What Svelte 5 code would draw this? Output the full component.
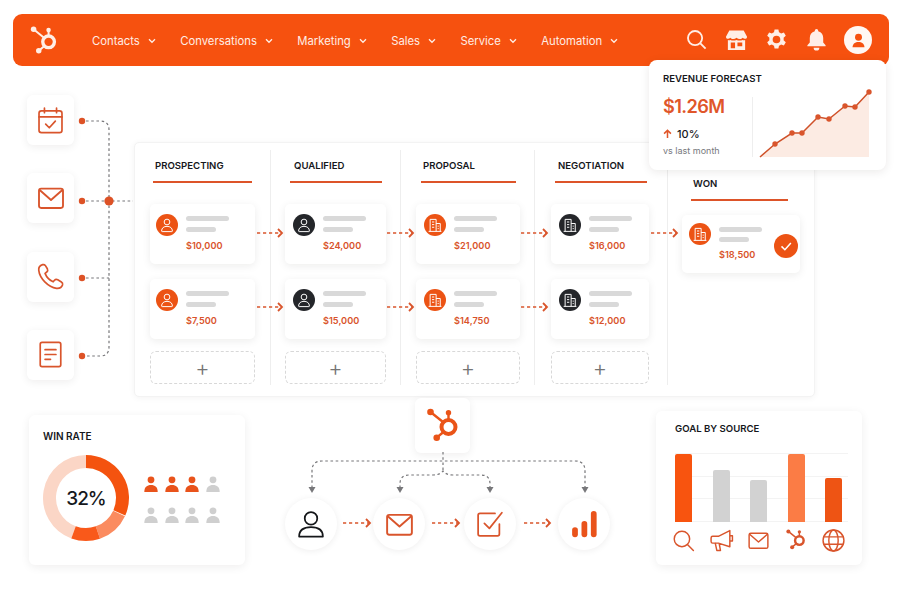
<script>
  const navItems = ['Contacts', 'Conversations', 'Marketing', 'Sales', 'Service', 'Automation'];

  const columns = [
    { name: 'PROSPECTING', key: 'c1', kind: 'person', dark: false, amounts: ['$10,000', '$7,500'] },
    { name: 'QUALIFIED', key: 'c2', kind: 'person', dark: true, amounts: ['$24,000', '$15,000'] },
    { name: 'PROPOSAL', key: 'c3', kind: 'building', dark: false, amounts: ['$21,000', '$14,750'] },
    { name: 'NEGOTIATION', key: 'c4', kind: 'building', dark: true, amounts: ['$16,000', '$12,000'] },
    { name: 'WON', key: 'c5', kind: 'building', dark: false, amounts: ['$18,500'], won: true }
  ];

  const cardArrows = [
    [257, 282, 233], [387, 413, 233], [521, 547, 233], [651, 677, 233],
    [257, 282, 307], [387, 413, 307], [521, 547, 307]
  ];
  const flowArrows = [[343, 370, 523], [432, 459, 523], [524, 550, 523]];
  const arrows = [...cardArrows, ...flowArrows];

  const forecast = [[775, 144], [792, 133], [802, 133], [818, 117], [829, 119], [845, 106], [855, 107], [869, 92]];
  const forecastLine = 'M760 157 ' + forecast.map((p) => `L${p[0]} ${p[1]}`).join(' ');
  const forecastArea = forecastLine + ' V157 Z';

  function arc(a0, a1, r = 36.5) {
    const p = (a) => {
      const t = ((a - 90) * Math.PI) / 180;
      return `${(r * Math.cos(t)).toFixed(2)} ${(r * Math.sin(t)).toFixed(2)}`;
    };
    return `M${p(a0)} A${r} ${r} 0 ${a1 - a0 > 180 ? 1 : 0} 1 ${p(a1)}`;
  }
  const donut = [
    { d: arc(200, 360), c: '#fbd6c6' },
    { d: arc(0, 114), c: '#f4530f' },
    { d: arc(115, 161), c: '#fb8b5f' },
    { d: arc(161, 200), c: '#f9591a' }
  ];

  const people = [true, true, true, false, false, false, false, false];

  const bars = [
    { h: 68, c: '#f8540f', icon: 'search' },
    { h: 52, c: '#d2d2d2', icon: 'mega' },
    { h: 42, c: '#d2d2d2', icon: 'mail' },
    { h: 68, c: '#fb7c45', icon: 'hub' },
    { h: 44, c: '#ee5414', icon: 'globe' }
  ];
</script>

{#snippet hub()}
  <circle class="hub-ring" cx="23.5" cy="20" r="7" />
  <path class="hub-spoke" d="M5.5 5 L18 15 M23.5 6 V13 M11.7 30.7 L18.5 25" />
  <circle class="hub-node" cx="5.5" cy="5" r="3.3" />
  <circle class="hub-node" cx="23.5" cy="5.7" r="2.7" />
  <circle class="hub-node" cx="11.7" cy="30.7" r="3.3" />
{/snippet}

{#snippet personGlyph()}
  <circle cx="12" cy="8" r="3.8" />
  <path d="M4.8 20 c0-4 3-6.2 7.2-6.2 s7.2 2.2 7.2 6.2 c0 .5-.3.8-.8.8 H5.6 c-.5 0-.8-.3-.8-.8 z" />
{/snippet}

{#snippet buildingGlyph()}
  <path d="M5.5 20.5 V4.5 h8 v16 M13.5 10 h5.5 v10.5 M3.5 20.5 h17 M8 8 h3 M8 11.5 h3 M8 15 h3 M15.5 13.5 h1.5 M15.5 16.8 h1.5" />
{/snippet}

{#snippet mailGlyph()}
  <rect x="3" y="5" width="18" height="14.5" rx="1.6" />
  <path d="M3.5 6 L12 13.5 L20.5 6" />
{/snippet}

{#snippet searchGlyph()}
  <circle cx="10.5" cy="10.5" r="7.4" />
  <path d="M16 16 L21.5 21.5" />
{/snippet}

<div class="page">
  <header class="nav">
    <svg class="nav-logo" viewBox="0 0 36 38">{@render hub()}</svg>
    <nav class="menu">
      {#each navItems as item}
        <span class="menu-item">
          {item}
          <svg class="chev" viewBox="0 0 8 6"><path d="M1 1.3 L4 4.3 L7 1.3" /></svg>
        </span>
      {/each}
    </nav>
    <div class="tools">
      <svg class="tool line" viewBox="0 0 24 24">{@render searchGlyph()}</svg>
      <svg class="tool" viewBox="0 0 24 24">
        <path class="solid" d="M4.5 2.5 H19.5 L23 9 C23 11.5 20 12 18.5 10.2 C17 12 14 12 12 10.2 C10 12 7 12 5.5 10.2 C4 12 1 11.5 1 9 Z" />
        <path class="solid" fill-rule="evenodd" d="M3 12.5 C4 12.8 5 12.8 5.6 12.4 C7.4 13.4 10 13.4 12 12.4 C14 13.4 16.6 13.4 18.4 12.4 C19 12.8 20 12.8 21 12.5 V23 H3 Z M6 15 V21 H10.5 V15 Z M13 15 V19 H18 V15 Z" />
      </svg>
      <svg class="tool" viewBox="0 0 24 24">
        <path class="solid" fill-rule="evenodd" d="M10 1.5 h4 l.6 3 a8 8 0 0 1 2.2 1.3 l2.9-1 2 3.4-2.3 2 a8 8 0 0 1 0 2.6 l2.3 2-2 3.4-2.9-1 a8 8 0 0 1-2.2 1.3 l-.6 3 h-4 l-.6-3 a8 8 0 0 1-2.2-1.3 l-2.9 1-2-3.4 2.3-2 a8 8 0 0 1 0-2.6 l-2.3-2 2-3.4 2.9 1 a8 8 0 0 1 2.2-1.3 z M12 8 a4 4 0 1 0 0 8 a4 4 0 0 0 0-8 z" />
      </svg>
      <svg class="tool" viewBox="0 0 24 24">
        <path class="solid" d="M12 1 a1.8 1.8 0 0 1 1.8 1.8 v.6 C17.4 4.3 19 7 19 10.5 V15 l2.5 3 v1 H2.5 v-1 L5 15 V10.5 C5 7 6.6 4.3 10.2 3.4 v-.6 A1.8 1.8 0 0 1 12 1 z" />
        <path class="solid" d="M9 20.5 h6 a3 3 0 0 1-6 0 z" />
      </svg>
      <span class="me">
        <svg viewBox="0 0 24 24">
          <circle cx="12" cy="8" r="4.4" />
          <path d="M4.5 20.5 c0-4.5 3.5-6.6 7.5-6.6 s7.5 2.1 7.5 6.6 z" />
        </svg>
      </span>
    </div>
  </header>

  <section class="middle">
    <div class="tiles">
      <div class="tile">
        <svg class="ic" viewBox="0 0 24 24">
          <rect x="2.5" y="4" width="19" height="18" rx="2" />
          <path d="M2.5 9 H21.5 M7 1.8 V5.5 M17 1.8 V5.5 M8 15 L11 18 L16 12.5" />
        </svg>
      </div>
      <div class="tile">
        <svg class="ic mail-tile" viewBox="0 0 24 24">{@render mailGlyph()}</svg>
      </div>
      <div class="tile">
        <svg class="ic" viewBox="0 0 24 24">
          <path d="M5.5 2.2 C3.4 2.8 2 4.6 2.3 7 C3 13.5 10 20.8 17 21.8 C19.5 22 21.4 20.8 22 18.8 C22.2 17.8 21.8 17 21 16.5 L18 14.7 C17 14.1 16 14.3 15.3 15.1 L14.2 16.4 C11 15 8.7 12.4 7.5 9.4 L8.9 8.3 C9.7 7.6 9.9 6.6 9.4 5.6 L7.8 3 C7.3 2.3 6.4 2 5.5 2.2 Z" />
        </svg>
      </div>
      <div class="tile">
        <svg class="ic" viewBox="0 0 24 24">
          <path d="M5 2 H19 A1.5 1.5 0 0 1 20.5 3.5 V20.5 A1.5 1.5 0 0 1 19 22 H5 A1.5 1.5 0 0 1 3.5 20.5 V3.5 A1.5 1.5 0 0 1 5 2 Z M7.5 8 H16.5 M7.5 12 H16.5 M7.5 16 H12" />
        </svg>
      </div>
    </div>

    <div class="board">
      {#each columns as col}
        <div class="col {col.key}">
          <div class="heading"><span>{col.name}</span></div>
          {#each col.amounts as amount}
            <div class="card" class:won={col.won}>
              <span class="avatar" class:dark={col.dark}>
                <svg viewBox="0 0 24 24">
                  {#if col.kind === 'person'}
                    {@render personGlyph()}
                  {:else}
                    {@render buildingGlyph()}
                  {/if}
                </svg>
              </span>
              <div class="stack">
                <i class="bar-a"></i>
                <i class="bar-b"></i>
                <b>{amount}</b>
              </div>
              {#if col.won}
                <span class="check">
                  <svg viewBox="0 0 24 24"><path d="M6 12.5 L10.5 17 L18.5 8" /></svg>
                </span>
              {/if}
            </div>
          {/each}
          {#if !col.won}
            <div class="add">+</div>
          {/if}
        </div>
      {/each}
    </div>
  </section>

  <section class="bottom">
    <div class="panel win">
      <h3>WIN RATE</h3>
      <div class="win-body">
        <div class="donut">
          <svg viewBox="-44 -44 88 88">
            {#each donut as seg}
              <path d={seg.d} stroke={seg.c} />
            {/each}
          </svg>
          <span>32%</span>
        </div>
        <div class="people">
          {#each people as on}
            <svg class:on viewBox="0 0 14 16">
              <circle cx="7" cy="3.8" r="3.4" />
              <path d="M0.3 16 C0.3 11 3 9 7 9 S13.7 11 13.7 16 Z" />
            </svg>
          {/each}
        </div>
      </div>
    </div>

    <div class="flow">
      <div class="flow-logo">
        <svg viewBox="0 0 36 38">{@render hub()}</svg>
      </div>
      <div class="steps">
        <span class="step black">
          <svg class="ic" viewBox="0 0 24 24">
            <circle cx="12" cy="7.5" r="5" />
            <path d="M2.5 22 C2.5 17 6 14.5 12 14.5 S21.5 17 21.5 22 Z" />
          </svg>
        </span>
        <span class="step">
          <svg class="ic mail-step" viewBox="0 0 24 24">{@render mailGlyph()}</svg>
        </span>
        <span class="step">
          <svg class="ic" viewBox="0 0 24 24">
            <path d="M19.5 12 V20 A1.5 1.5 0 0 1 18 21.5 H4 A1.5 1.5 0 0 1 2.5 20 V5 A1.5 1.5 0 0 1 4 3.5 H16 M7.5 11.5 L11.5 15.5 L21.5 3" />
          </svg>
        </span>
        <span class="step">
          <svg viewBox="0 0 24 24">
            <rect class="stat" x="2.5" y="14.5" width="4.6" height="8" rx="2.3" />
            <rect class="stat" x="10" y="9.5" width="4.6" height="13" rx="2.3" />
            <rect class="stat" x="17.5" y="1.5" width="4.6" height="21" rx="2.3" />
          </svg>
        </span>
      </div>
    </div>

    <div class="panel goal">
      <h3>GOAL BY SOURCE</h3>
      <div class="plot">
        {#each bars as bar}
          <div class="slot"><i style="height:{bar.h}px;background:{bar.c}"></i></div>
        {/each}
      </div>
      <div class="sources">
        {#each bars as bar}
          <div class="slot">
            {#if bar.icon === 'search'}
              <svg class="ic" viewBox="0 0 24 24">{@render searchGlyph()}</svg>
            {:else if bar.icon === 'mega'}
              <svg class="ic" viewBox="0 0 24 24">
                <path d="M2 9.5 C2 8.5 2.8 8 3.5 8 H9 L20 2.5 V18 L9 14.5 H3.5 C2.8 14.5 2 13.8 2 13 Z M6 14.5 L7.5 21.5 H11 L9.8 15 M20 7.5 H22.5 V12.5 H20" />
              </svg>
            {:else if bar.icon === 'mail'}
              <svg class="ic" viewBox="0 0 24 24">{@render mailGlyph()}</svg>
            {:else if bar.icon === 'hub'}
              <svg class="hub-small" viewBox="0 0 36 38">{@render hub()}</svg>
            {:else}
              <svg class="ic" viewBox="0 0 24 24">
                <circle cx="12" cy="12" r="10" />
                <ellipse cx="12" cy="12" rx="4.5" ry="10" />
                <path d="M2.8 8.5 H21.2 M2.8 15.5 H21.2" />
              </svg>
            {/if}
          </div>
        {/each}
      </div>
    </div>
  </section>

  <svg class="wires" viewBox="0 0 902 604">
    <g class="dash-gray">
      <path d="M86 121 H100 Q109 121 109 130 V347 Q109 356 100 356 H86" />
      <path d="M86 201 H133" />
      <path d="M86 278 H109" />
      <path d="M443 452 V471" />
      <path d="M312 488 V471 Q312 461 322 461 H575 Q585 461 585 471 V488" />
      <path d="M400 488 V484 Q400 475 409 475 H433 Q440 475 443 471 Q446 475 453 475 H481 Q490 475 490 484 V488" />
    </g>
    <g class="dots">
      <circle cx="82" cy="121" r="3.2" />
      <circle cx="82" cy="201" r="3.2" />
      <circle cx="82" cy="278" r="3.2" />
      <circle cx="82" cy="356" r="3.2" />
      <circle cx="109" cy="201" r="4.6" />
    </g>
    <g class="heads">
      <path d="M308.5 487 H315.5 L312 493 Z" />
      <path d="M396.5 487 H403.5 L400 493 Z" />
      <path d="M486.5 487 H493.5 L490 493 Z" />
      <path d="M581.5 487 H588.5 L585 493 Z" />
    </g>
    <g class="dash-red">
      {#each arrows as a}
        <path d="M{a[0]} {a[2]} H{a[1] - 1}" />
        <path class="tip" d="M{a[1] - 4} {a[2] - 4} L{a[1]} {a[2]} L{a[1] - 4} {a[2] + 4}" />
      {/each}
    </g>
  </svg>

  <aside class="forecast">
    <h3>REVENUE FORECAST</h3>
    <div class="forecast-body">
      <div class="figures">
        <div class="big">$1.26M</div>
        <div class="delta">
          <svg viewBox="0 0 10 10"><path d="M5 9.5 V1 M1.2 4.6 L5 1 L8.8 4.6" /></svg>
          10%
        </div>
        <div class="vs">vs last month</div>
      </div>
      <svg class="spark" viewBox="752 88 124 72">
        <line x1="752.5" y1="97" x2="752.5" y2="157" />
        <path class="area" d={forecastArea} />
        <path class="trend" d={forecastLine} />
        {#each forecast as p}
          <circle cx={p[0]} cy={p[1]} r="2.7" />
        {/each}
      </svg>
    </div>
  </aside>
</div>

<style>
  :global(body) {
    margin: 0;
    background: #fff;
  }

  .page {
    position: relative;
    width: 902px;
    height: 604px;
    overflow: hidden;
    padding: 14px 13px 0;
    box-sizing: border-box;
    font-family: Inter, "Liberation Sans", sans-serif;
    color: #16181c;
  }

  h3 {
    margin: 0;
    font-size: 9.6px;
    line-height: 12px;
    font-weight: 600;
  }

  /* ---------- nav ---------- */
  .nav {
    display: flex;
    align-items: center;
    height: 52px;
    padding: 0 16px;
    background: #f6510f;
    border-radius: 9px;
    color: #ffeee6;
  }

  .nav-logo {
    width: 30px;
    height: 32px;
    margin-top: 1px;
    --hub: #ffeee6;
  }

  .hub-ring {
    fill: none;
    stroke: var(--hub);
    stroke-width: 4;
  }

  .hub-spoke {
    fill: none;
    stroke: var(--hub);
    stroke-width: 2.4;
  }

  .hub-node {
    fill: var(--hub);
  }

  .menu {
    display: flex;
    margin-left: 33px;
    gap: 24.4px;
  }

  .menu-item {
    display: flex;
    align-items: center;
    gap: 8px;
    font-size: 11.3px;
    font-weight: 400;
    line-height: 14px;
    margin-top: 2px;
    white-space: nowrap;
  }

  .chev {
    width: 8px;
    height: 6px;
    fill: none;
    stroke: currentColor;
    stroke-width: 1.3;
  }

  .tools {
    display: flex;
    align-items: center;
    margin-left: auto;
    margin-right: 1px;
    gap: 17px;
  }

  .tool {
    width: 23px;
    height: 23px;
    margin-top: -2px;
  }

  .tool.line {
    fill: none;
    stroke: currentColor;
    stroke-width: 1.9;
  }

  .solid {
    fill: currentColor;
  }

  .me {
    display: flex;
    align-items: center;
    justify-content: center;
    width: 28px;
    height: 28px;
    border-radius: 50%;
    background: #fff7f2;
    margin-left: -1px;
  }

  .me svg {
    width: 19px;
    height: 19px;
    fill: #f6510f;
  }

  /* ---------- middle ---------- */
  .middle {
    display: flex;
    height: 302px;
    margin-top: 29px;
  }

  .tiles {
    display: flex;
    flex-direction: column;
    justify-content: space-between;
    width: 47px;
    height: 285px;
    margin-left: 14px;
  }

  .tile {
    display: flex;
    align-items: center;
    justify-content: center;
    height: 50px;
    border-radius: 6px;
    background: #fff;
    box-shadow: 0 2px 8px rgba(30, 20, 10, 0.07);
  }

  .tile svg {
    width: 29px;
    height: 29px;
  }

  .tile .mail-tile {
    width: 32px;
    height: 32px;
  }

  .ic {
    fill: none;
    stroke: #d9552c;
    stroke-width: 1.4;
    stroke-linejoin: round;
    stroke-linecap: round;
  }

  .board {
    display: grid;
    grid-template-columns: 135px 130px 134px 133px 147px;
    height: 255px;
    margin: 47px 0 0 60px;
    box-sizing: border-box;
    width: 681px;
    border: 1px solid #f3f3f3;
    border-radius: 5px;
    background: #fff;
    box-shadow: 0 1px 6px rgba(30, 20, 10, 0.05);
  }

  .col {
    box-sizing: border-box;
    height: 235px;
    margin-top: 7px;
    padding-top: 10px;
    border-left: 1px solid #eeeeee;
  }

  .c1 { padding-left: 15px; padding-right: 15px; border-left: 0; }
  .c2 { padding-left: 14px; padding-right: 14px; }
  .c3 { padding-left: 15px; padding-right: 14px; }
  .c4 { padding-left: 16px; padding-right: 18px; }
  .c5 { padding-left: 14px; padding-right: 14px; padding-top: 28px; }

  .heading {
    height: 21px;
    border-bottom: 2px solid #dd5429;
    font-size: 9.6px;
    line-height: 12px;
    font-weight: 600;
  }

  .c1 .heading { margin: 0 3px 21px; padding-left: 2px; }
  .c2 .heading { margin: 0 4px 21px 5px; padding-left: 4px; }
  .c3 .heading { margin: 0 4px 21px 5px; padding-left: 2px; }
  .c4 .heading { margin: 0 2px 21px 4px; padding-left: 3px; }
  .c5 .heading { margin: 0 12px 14px 9px; padding-left: 2px; }

  .card {
    display: flex;
    box-sizing: border-box;
    height: 60px;
    margin-bottom: 15px;
    padding-left: 8px;
    border-radius: 5px;
    background: #fff;
    box-shadow: 0 2px 8px rgba(30, 20, 10, 0.08);
  }

  .c1 .card {
    padding-left: 6px;
  }

  .avatar {
    display: flex;
    flex: none;
    align-items: center;
    justify-content: center;
    width: 22px;
    height: 22px;
    margin-top: 10px;
    border-radius: 50%;
    background: #ec5314;
  }

  .avatar.dark {
    background: #24262a;
  }

  .avatar svg {
    width: 18px;
    height: 18px;
    fill: none;
    stroke: #fff;
    stroke-width: 1.3;
  }

  .stack {
    display: flex;
    flex-direction: column;
    margin-left: 8px;
    padding-top: 12px;
  }

  .stack i {
    display: block;
    height: 5px;
    border-radius: 2.5px;
    background: #d9d9d9;
  }

  .bar-a {
    width: 43px;
  }

  .bar-b {
    width: 30px;
    margin-top: 6px;
  }

  .stack b {
    margin-top: 8px;
    font-size: 9.2px;
    line-height: 12px;
    font-weight: 600;
    color: #d9532b;
  }

  .card.won {
    height: 58px;
  }

  .won .avatar {
    margin-top: 8px;
    margin-left: -1px;
  }

  .won .stack {
    padding-top: 12px;
  }

  .won .bar-b {
    margin-top: 5px;
  }

  .won .stack b {
    margin-top: 7px;
  }

  .check {
    display: flex;
    align-items: center;
    justify-content: center;
    width: 24px;
    height: 24px;
    margin: 19px 2px 0 auto;
    border-radius: 50%;
    background: #ec5314;
  }

  .check svg {
    width: 18px;
    height: 18px;
    fill: none;
    stroke: #fff;
    stroke-width: 2;
  }

  .add {
    display: flex;
    align-items: center;
    justify-content: center;
    box-sizing: border-box;
    height: 33px;
    margin-top: -3px;
    border: 1px dashed #d8d8d8;
    border-radius: 6px;
    font-size: 22px;
    font-weight: 300;
    color: #757575;
  }

  /* ---------- bottom ---------- */
  .bottom {
    display: flex;
    align-items: flex-start;
  }

  .panel {
    box-sizing: border-box;
    border-radius: 6px;
    background: #fff;
    box-shadow: 0 2px 10px rgba(30, 20, 10, 0.07);
  }

  .win {
    width: 216px;
    height: 150px;
    margin: 18px 0 0 16px;
    padding: 15px 0 0 14px;
  }

  .win h3 {
    font-size: 10px;
  }

  .win-body {
    display: flex;
    align-items: flex-start;
    margin-top: 12px;
    margin-left: -1px;
  }

  .donut {
    position: relative;
    flex: none;
    width: 88px;
    height: 88px;
  }

  .donut svg {
    display: block;
    width: 88px;
    height: 88px;
  }

  .donut path {
    fill: none;
    stroke-width: 13;
  }

  .donut span {
    position: absolute;
    inset: 0;
    display: flex;
    align-items: center;
    justify-content: center;
    font-size: 19px;
    font-weight: 500;
    letter-spacing: -1px;
    color: #16181c;
  }

  .people {
    display: grid;
    grid-template-columns: repeat(4, 14px);
    gap: 15px 6.7px;
    margin: 22px 0 0 14px;
  }

  .people svg {
    display: block;
    width: 14px;
    height: 16px;
    fill: #cfcfcf;
  }

  .people svg.on {
    fill: #e9531b;
  }

  .flow {
    width: 325px;
    margin-left: 40px;
  }

  .flow-logo {
    display: flex;
    align-items: center;
    justify-content: center;
    width: 55px;
    height: 55px;
    margin: 1px 0 0 130px;
    border-radius: 6px;
    background: #fff;
    box-shadow: 0 2px 8px rgba(30, 20, 10, 0.07);
    --hub: #ea5418;
  }

  .flow-logo svg {
    width: 36px;
    height: 38px;
  }

  .steps {
    display: flex;
    margin-top: 45px;
  }

  .step {
    display: flex;
    flex: none;
    align-items: center;
    justify-content: center;
    width: 52px;
    height: 52px;
    border-radius: 50%;
    background: #fff;
    box-shadow: 0 1px 7px rgba(30, 20, 10, 0.07);
  }

  .step svg {
    width: 30px;
    height: 30px;
  }

  .step .mail-step {
    width: 33px;
    height: 33px;
  }

  .step + .step { margin-left: 36px; }
  .step + .step + .step { margin-left: 39px; }
  .step + .step + .step + .step { margin-left: 42px; }

  .step.black .ic {
    stroke: #15171a;
  }

  .stat {
    fill: #e9531b;
  }

  .goal {
    width: 206px;
    height: 154px;
    margin: 14px 0 0 46px;
    padding: 12px 14px 0 19px;
  }

  .plot,
  .sources {
    display: grid;
    grid-template-columns: repeat(5, 37.5px);
    width: 173px;
  }

  .plot {
    align-items: end;
    height: 69px;
    margin-top: 18px;
    background: repeating-linear-gradient(to bottom, #f3f3f3 0 1px, transparent 1px 22.67px);
  }

  .plot .slot i {
    display: block;
    width: 17px;
    border-radius: 2px 2px 0 0;
  }

  .sources {
    margin-top: 6px;
  }

  .sources .slot {
    display: flex;
    justify-content: center;
    width: 17px;
  }

  .sources svg {
    flex: none;
    width: 25px;
    height: 25px;
    margin: 0 -4px;
  }

  .sources .hub-small {
    --hub: #d9552c;
    width: 22px;
    height: 24px;
    margin-top: 0;
  }

  /* ---------- overlays ---------- */
  .wires {
    position: absolute;
    inset: 0;
    width: 902px;
    height: 604px;
    pointer-events: none;
  }

  .dash-gray path {
    fill: none;
    stroke: #77777a;
    stroke-width: 1.2;
    stroke-dasharray: 2.6 2.6;
  }

  .dots circle {
    fill: #dd5226;
  }

  .heads path {
    fill: #77777a;
  }

  .dash-red path {
    fill: none;
    stroke: #d9552c;
    stroke-width: 1.3;
    stroke-dasharray: 3.2 2.8;
  }

  .dash-red .tip {
    stroke-width: 1.8;
    stroke-dasharray: none;
  }

  .forecast {
    position: absolute;
    left: 649px;
    top: 60px;
    box-sizing: border-box;
    width: 237px;
    height: 110px;
    padding: 13px 0 0 14px;
    border-radius: 8px;
    background: #fff;
    box-shadow: 0 2px 10px rgba(30, 20, 10, 0.09);
  }

  .forecast-body {
    display: flex;
    margin-top: 3px;
  }

  .figures {
    width: 89px;
    padding-top: 6px;
  }

  .big {
    font-size: 18.2px;
    line-height: 24px;
    font-weight: 600;
    letter-spacing: -0.6px;
    color: #e0562a;
  }

  .delta {
    display: flex;
    align-items: center;
    gap: 5px;
    margin-top: 9px;
    font-size: 11px;
    line-height: 14px;
    font-weight: 500;
  }

  .delta svg {
    width: 9px;
    height: 10px;
    fill: none;
    stroke: #e0562a;
    stroke-width: 1.7;
  }

  .vs {
    margin-top: 4px;
    font-size: 9px;
    line-height: 12px;
    color: #77797d;
  }

  .spark {
    flex: none;
    width: 124px;
    height: 72px;
  }

  .spark line {
    stroke: #eeeeee;
  }

  .area {
    fill: #fcebe3;
  }

  .trend {
    fill: none;
    stroke: #cf5129;
    stroke-width: 1.5;
  }

  .spark circle {
    fill: #d9552c;
  }
</style>
